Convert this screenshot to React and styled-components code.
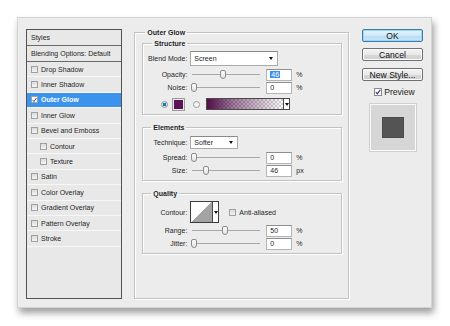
import styled, { createGlobalStyle } from "styled-components";

const Global = createGlobalStyle`
  html, body { margin: 0; padding: 0; background: #fff; }
  body { font-family: "Liberation Sans", Arial, sans-serif; color: #1e1e1e; }
  * { box-sizing: border-box; }
`

const Page = styled.div`
  width: 450px;
  height: 326px;
  padding: 17px 0 0 17px;
`

const Dialog = styled.div`
  width: 415px;
  height: 291px;
  display: flex;
  padding: 11px 8px 10px 8px;
  background: #ececec;
  border: 1px solid #d4d4d4;
  box-shadow: 2px 5px 7px rgba(0, 0, 0, 0.38);
`

const StyleList = styled.div`
  width: 97px;
  height: 270px;
  border: 1px solid #525252;
  background: #e8e8e8;
  display: flex;
  flex-direction: column;
`

const Item = styled.div`
  display: flex;
  align-items: center;
  height: ${p => p.$h || 15.4}px;
  flex: none;
  padding-left: ${p => p.$indent ? 13 : 4}px;
  font-size: 7px;
  border-bottom: 1px solid ${p => p.$dark ? "#6a6a6a" : "#f7f7f7"};
  background: ${p => p.$active ? "#3b93ee" : "transparent"};
  color: ${p => p.$active ? "#fff" : "#1e1e1e"};
  font-weight: ${p => p.$active ? "bold" : "normal"};
`

const Box = styled.span`
  width: 7px;
  height: 7px;
  margin-right: 3px;
  flex: none;
  border: 1px solid #a0a0a0;
  background: ${p => p.$on ? "#fff" : "linear-gradient(#dcdcdc, #f4f4f4)"};
  display: flex;
  align-items: center;
  justify-content: center;
`

const Main = styled.fieldset`
  margin: -1px 0 0 12px;
  padding: 2px 6px 0 7px;
  width: 216px;
  height: 271px;
  min-width: 0;
  border: 1px solid #c2c2c2;
  box-shadow: inset 1px 1px 0 #fff, 1px 1px 0 #fff;
`

const Group = styled.fieldset`
  margin: 0 0 ${p => p.$mb || 0}px 0;
  padding: ${p => p.$pt}px 5px ${p => p.$pb}px 4px;
  min-width: 0;
  border: 1px solid #c2c2c2;
  box-shadow: inset 1px 1px 0 #fff, 1px 1px 0 #fff;
`

const Legend = styled.legend`
  font-size: 7px;
  line-height: 9px;
  font-weight: bold;
  padding: 0 2px;
  margin-left: ${p => p.$ml}px;
  color: #1e1e1e;
`

const Row = styled.div`
  display: flex;
  align-items: center;
  height: ${p => p.$h || 13}px;
  margin-top: ${p => p.$mt || 0}px;
`

const Label = styled.span`
  width: 41px;
  text-align: right;
  font-size: 7px;
  padding-right: 1px;
  flex: none;
`

const Select = styled.div`
  width: ${p => p.$w}px;
  height: ${p => p.$h}px;
  margin-left: 2px;
  background: #fff;
  border: 1px solid #a9a9a9;
  border-top-color: #8a8a8a;
  font-size: 7px;
  display: flex;
  align-items: center;
  justify-content: space-between;
  padding: 0 4px 0 3px;
`

const Arrow = styled.span`
  width: 0;
  height: 0;
  border-left: 2.5px solid transparent;
  border-right: 2.5px solid transparent;
  border-top: 3px solid #111;
`

const Track = styled.div`
  position: relative;
  width: 70px;
  height: 11px;
  margin-left: 2px;
  flex: none;
  &::before {
    content: "";
    position: absolute;
    left: 2px;
    right: 0;
    top: 5px;
    height: 1px;
    background: #a8a8a8;
  }
`

const Thumb = styled.span`
  position: absolute;
  top: 1px;
  width: 6px;
  height: 9px;
  border: 1px solid #8c8c8c;
  border-radius: 2px 2px 3px 3px;
  background: linear-gradient(#fdfdfd, #e2e2e2);
`

const Field = styled.div`
  width: 26px;
  height: 12px;
  margin-left: 6px;
  background: #fff;
  border: 1px solid #b4b4b4;
  border-top-color: #8e8e8e;
  font-size: 7px;
  display: flex;
  align-items: center;
  padding-left: 3px;
`

const Selected = styled.span`
  background: #3b93ee;
  color: #fff;
  padding: 0 1px;
`

const Unit = styled.span`
  font-size: 7px;
  margin-left: 4px;
`

const Radio = styled.span`
  width: 7px;
  height: 7px;
  border-radius: 50%;
  flex: none;
  border: 1px solid #9a9a9a;
  background: ${p => p.$on ? "radial-gradient(circle, #1c7fa8 0 1.6px, #bfe4f2 2px)" : "#f6f6f6"};
`

const Swatch = styled.span`
  width: 11px;
  height: 11px;
  margin-left: 5px;
  background: #5c1356;
  border: 1px solid #e8e8e8;
  outline: 1px solid #9a9a9a;
`

const GradientBox = styled.div`
  width: 84px;
  height: 12px;
  margin-left: 6px;
  border: 1px solid #4a4a4a;
  display: flex;
`

const GradientFill = styled.span`
  flex: 1;
  background:
    linear-gradient(90deg, #4f0d48 0%, rgba(79, 13, 72, 0.55) 35%, rgba(79, 13, 72, 0) 100%),
    repeating-conic-gradient(#cfcfcf 0 25%, #fff 0 50%) 0 0 / 4px 4px;
`

const ArrowCell = styled.span`
  width: 6px;
  background: #fff;
  border-left: 1px solid #4a4a4a;
  display: flex;
  align-items: center;
  justify-content: center;
`

const Contour = styled.div`
  width: 29px;
  height: 22px;
  margin-left: 2px;
  border: 1px solid #3c3c3c;
  display: flex;
  background: #fff;
`

const ContourPic = styled.span`
  flex: 1;
  background: linear-gradient(to top left, #a3a3a3 50%, #fdfdfd 50%);
`

const Check = styled.label`
  display: flex;
  align-items: center;
  margin-left: 10px;
  font-size: 7px;
`

const Side = styled.div`
  margin-left: 13px;
  width: 61px;
  display: flex;
  flex-direction: column;
  align-items: center;
`

const Button = styled.div`
  width: 61px;
  height: 13px;
  margin-bottom: ${p => p.$mb}px;
  border: 1px solid ${p => p.$primary ? "#3d7bad" : "#707070"};
  border-radius: 2px;
  background: ${p => p.$primary
    ? "linear-gradient(#e8f5fc 0%, #cfe9f8 50%, #b6dcf2 51%, #c8e6f7 100%)"
    : "linear-gradient(#f3f3f3 0%, #e9e9e9 50%, #d9d9d9 51%, #cfcfcf 100%)"};
  box-shadow: inset 0 0 0 1px ${p => p.$primary ? "#9fd3ef" : "#fbfbfb"};
  font-size: 8.6px;
  display: flex;
  align-items: center;
  justify-content: center;
  color: #111;
`

const Preview = styled.label`
  display: flex;
  align-items: center;
  font-size: 8.6px;
  margin-left: 4px;
  height: 11px;
`

const PreviewBox = styled.span`
  width: 8px;
  height: 8px;
  margin-right: 2px;
  border: 1px solid #8a8a8a;
  background: #fff;
  display: flex;
  align-items: center;
  justify-content: center;
`

const PreviewSwatch = styled.div`
  margin: 7px 0 0 0;
  width: 46px;
  height: 47px;
  background: #d6d6d6;
  border: 1px solid #fafafa;
  outline: 1px solid #d0d0d0;
  display: flex;
  align-items: center;
  justify-content: center;
`

const PreviewInner = styled.span`
  width: 22px;
  height: 21px;
  background: #545454;
  border: 1px solid #4a4a4a;
`

const Tick = ({ color = "#2a2a9a" }) => (
  <svg width="6" height="6" viewBox="0 0 6 6">
    <path d="M0.8 3.1 L2.3 4.8 L5.3 0.8" fill="none" stroke={color} strokeWidth="1.1" />
  </svg>
)

function Slider({ value, max = 100 }) {
  return (
    <Track>
      <Thumb style={{ left: 1 + (value / max) * 62 }} />
    </Track>
  )
}

function SliderRow({ label, value, max, unit = "%", selected }) {
  return (
    <Row>
      <Label>{label}</Label>
      <Slider value={value} max={max} />
      <Field>{selected ? <Selected>{value}</Selected> : value}</Field>
      <Unit>{unit}</Unit>
    </Row>
  )
}

const effects = [
  { name: "Drop Shadow" },
  { name: "Inner Shadow" },
  { name: "Outer Glow", active: true },
  { name: "Inner Glow" },
  { name: "Bevel and Emboss" },
  { name: "Contour", indent: true },
  { name: "Texture", indent: true },
  { name: "Satin" },
  { name: "Color Overlay" },
  { name: "Gradient Overlay" },
  { name: "Pattern Overlay" },
  { name: "Stroke" },
]

export default function App() {
  return (
    <Page>
      <Global />
      <Dialog>
        <StyleList>
          <Item $h={16} $dark>Styles</Item>
          <Item $h={16} $dark>Blending Options: Default</Item>
          {effects.map(e => (
            <Item key={e.name} $active={e.active} $indent={e.indent}>
              <Box $on={e.active}>{e.active && <Tick />}</Box>
              {e.name}
            </Item>
          ))}
        </StyleList>

        <Main>
          <Legend $ml={3}>Outer Glow</Legend>
          <Group $pt={3} $pb={4} $mb={8}>
            <Legend $ml={5}>Structure</Legend>
            <Row $h={15} style={{ marginBottom: 2 }}>
              <Label>Blend Mode:</Label>
              <Select $w={88} $h={15}>Screen<Arrow /></Select>
            </Row>
            <SliderRow label="Opacity:" value={46} selected />
            <SliderRow label="Noise:" value={0} />
            <Row $h={12} $mt={4} style={{ paddingLeft: 14 }}>
              <Radio $on />
              <Swatch />
              <Radio style={{ marginLeft: 9 }} />
              <GradientBox>
                <GradientFill />
                <ArrowCell><Arrow /></ArrowCell>
              </GradientBox>
            </Row>
          </Group>

          <Group $pt={4} $pb={3} $mb={8}>
            <Legend $ml={4}>Elements</Legend>
            <Row $h={13} style={{ marginBottom: 2 }}>
              <Label>Technique:</Label>
              <Select $w={48} $h={13}>Softer<Arrow /></Select>
            </Row>
            <SliderRow label="Spread:" value={0} />
            <SliderRow label="Size:" value={46} max={250} unit="px" />
          </Group>

          <Group $pt={3} $pb={3}>
            <Legend $ml={4}>Quality</Legend>
            <Row $h={22} style={{ marginBottom: 1 }}>
              <Label>Contour:</Label>
              <Contour>
                <ContourPic />
                <ArrowCell><Arrow /></ArrowCell>
              </Contour>
              <Check><Box />Anti-aliased</Check>
            </Row>
            <SliderRow label="Range:" value={50} />
            <SliderRow label="Jitter:" value={0} />
          </Group>
        </Main>

        <Side>
          <Button $primary $mb={6}>OK</Button>
          <Button $mb={7}>Cancel</Button>
          <Button $mb={5}>New Style...</Button>
          <Preview><PreviewBox><Tick /></PreviewBox>Preview</Preview>
          <PreviewSwatch><PreviewInner /></PreviewSwatch>
        </Side>
      </Dialog>
    </Page>
  )
}
